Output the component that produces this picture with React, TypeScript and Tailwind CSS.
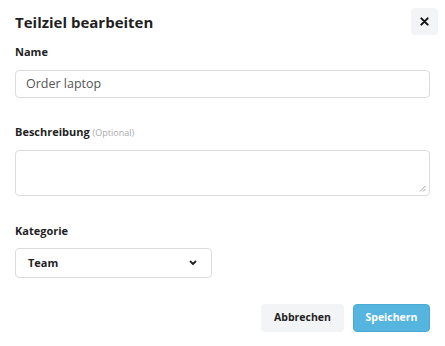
import React from "react";

export default function App() {
  return (
    <div className="w-[445px] h-[346px] bg-white text-[#1f1f1f]" style={{ fontFamily: '"Open Sans", sans-serif' }}>
      <div className="px-[15px] pt-[8px]">
        <div className="flex items-center justify-between">
          <h1 className="text-[15px] font-bold leading-[24px]">Teilziel bearbeiten</h1>
          <button className="w-[27px] h-[27px] rounded-[4px] bg-[#f3f4f6] flex items-center justify-center -mr-[8px]">
            <svg width="9" height="9" viewBox="0 0 10 10" fill="none" stroke="#111" strokeWidth="2.2" strokeLinecap="round">
              <path d="M1.5 1.5 8.5 8.5M8.5 1.5 1.5 8.5" />
            </svg>
          </button>
        </div>
        <label className="block mt-[8px] text-[11px] font-bold leading-[18px]">Name</label>
        <div className="mt-[9px] h-[28px] border border-[#dcdcdc] rounded-[4px] flex items-center px-[10px] text-[12.5px] text-[#555]">
          Order laptop
        </div>
        <label className="block mt-[25px] text-[11px] font-bold leading-[18px]">
          Beschreibung <span className="text-[9px] font-normal text-[#aaa]">(Optional)</span>
        </label>
        <div className="relative mt-[8px] h-[46px] border border-[#dcdcdc] rounded-[4px]">
          <svg className="absolute right-[3px] bottom-[3px]" width="7" height="7" viewBox="0 0 7 7" stroke="#999" strokeWidth="0.9">
            <path d="M6.5 1 1 6.5M6.5 4 4 6.5" />
          </svg>
        </div>
        <label className="block mt-[26px] text-[11px] font-bold leading-[18px]">Kategorie</label>
        <div className="mt-[8px] w-[197px] h-[30px] border border-[#dcdcdc] rounded-[4px] flex items-center justify-between pl-[12px] pr-[14px]">
          <span className="text-[11px] font-bold">Team</span>
          <svg width="8" height="6" viewBox="0 0 8 6" fill="none" stroke="#222" strokeWidth="1.8" strokeLinecap="round" strokeLinejoin="round">
            <path d="M1.5 1.5 4 4 6.5 1.5" />
          </svg>
        </div>
        <div className="mt-[26px] flex justify-end gap-[9px]">
          <button className="w-[83px] h-[28px] rounded-[4px] bg-[#f3f4f6] text-[10.5px] font-bold text-[#1f1f1f]">Abbrechen</button>
          <button className="w-[77px] h-[28px] rounded-[4px] bg-[#55b5df] border border-[#4aaad6] text-[10.5px] font-bold text-white">Speichern</button>
        </div>
      </div>
    </div>
  );
}
